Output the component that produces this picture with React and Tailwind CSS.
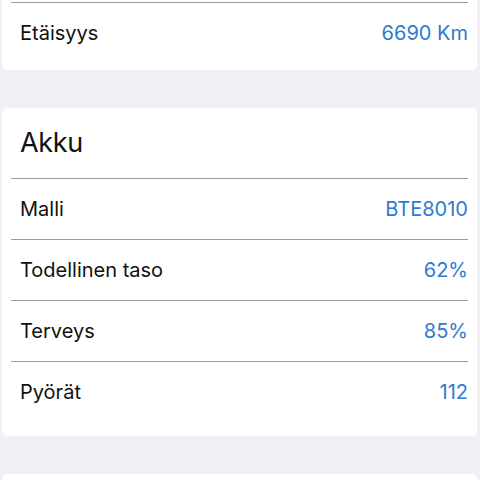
import React from "react";

const Row = ({ label, value }) => (
  <div className="flex h-[60px] items-center justify-between pl-[18px] pr-[9px]">
    <span className="text-[20px] text-[#111111]">{label}</span>
    <span className="text-[20px] text-[#2f7bd0]">{value}</span>
  </div>
);

const Separator = () => <div className="mx-[9px] h-px bg-[#9b9b9b]" />;

const battery = [
  { label: "Malli", value: "BTE8010" },
  { label: "Todellinen taso", value: "62%" },
  { label: "Terveys", value: "85%" },
  { label: "Pyörät", value: "112" },
];

export default function App() {
  return (
    <div
      className="flex h-[480px] w-[480px] flex-col overflow-hidden bg-[#f0f0f5] pl-[2px] pr-[3px]"
      style={{ fontFamily: "Inter, 'Noto Sans', sans-serif" }}
    >
      <div className="rounded-b-[5px] bg-white pt-[2px] pb-[7px]">
        <Separator />
        <Row label="Etäisyys" value="6690 Km" />
      </div>

      <div className="mt-[38px] rounded-[5px] bg-white pb-[14px]">
        <div className="flex h-[70px] items-center pl-[18px]">
          <span className="text-[27px] tracking-[-0.3px] text-[#111111]">Akku</span>
        </div>
        {battery.map((item) => (
          <div key={item.label}>
            <Separator />
            <Row label={item.label} value={item.value} />
          </div>
        ))}
      </div>

      <div className="mt-[38px] h-[40px] shrink-0 rounded-t-[5px] bg-white" />
    </div>
  );
}
